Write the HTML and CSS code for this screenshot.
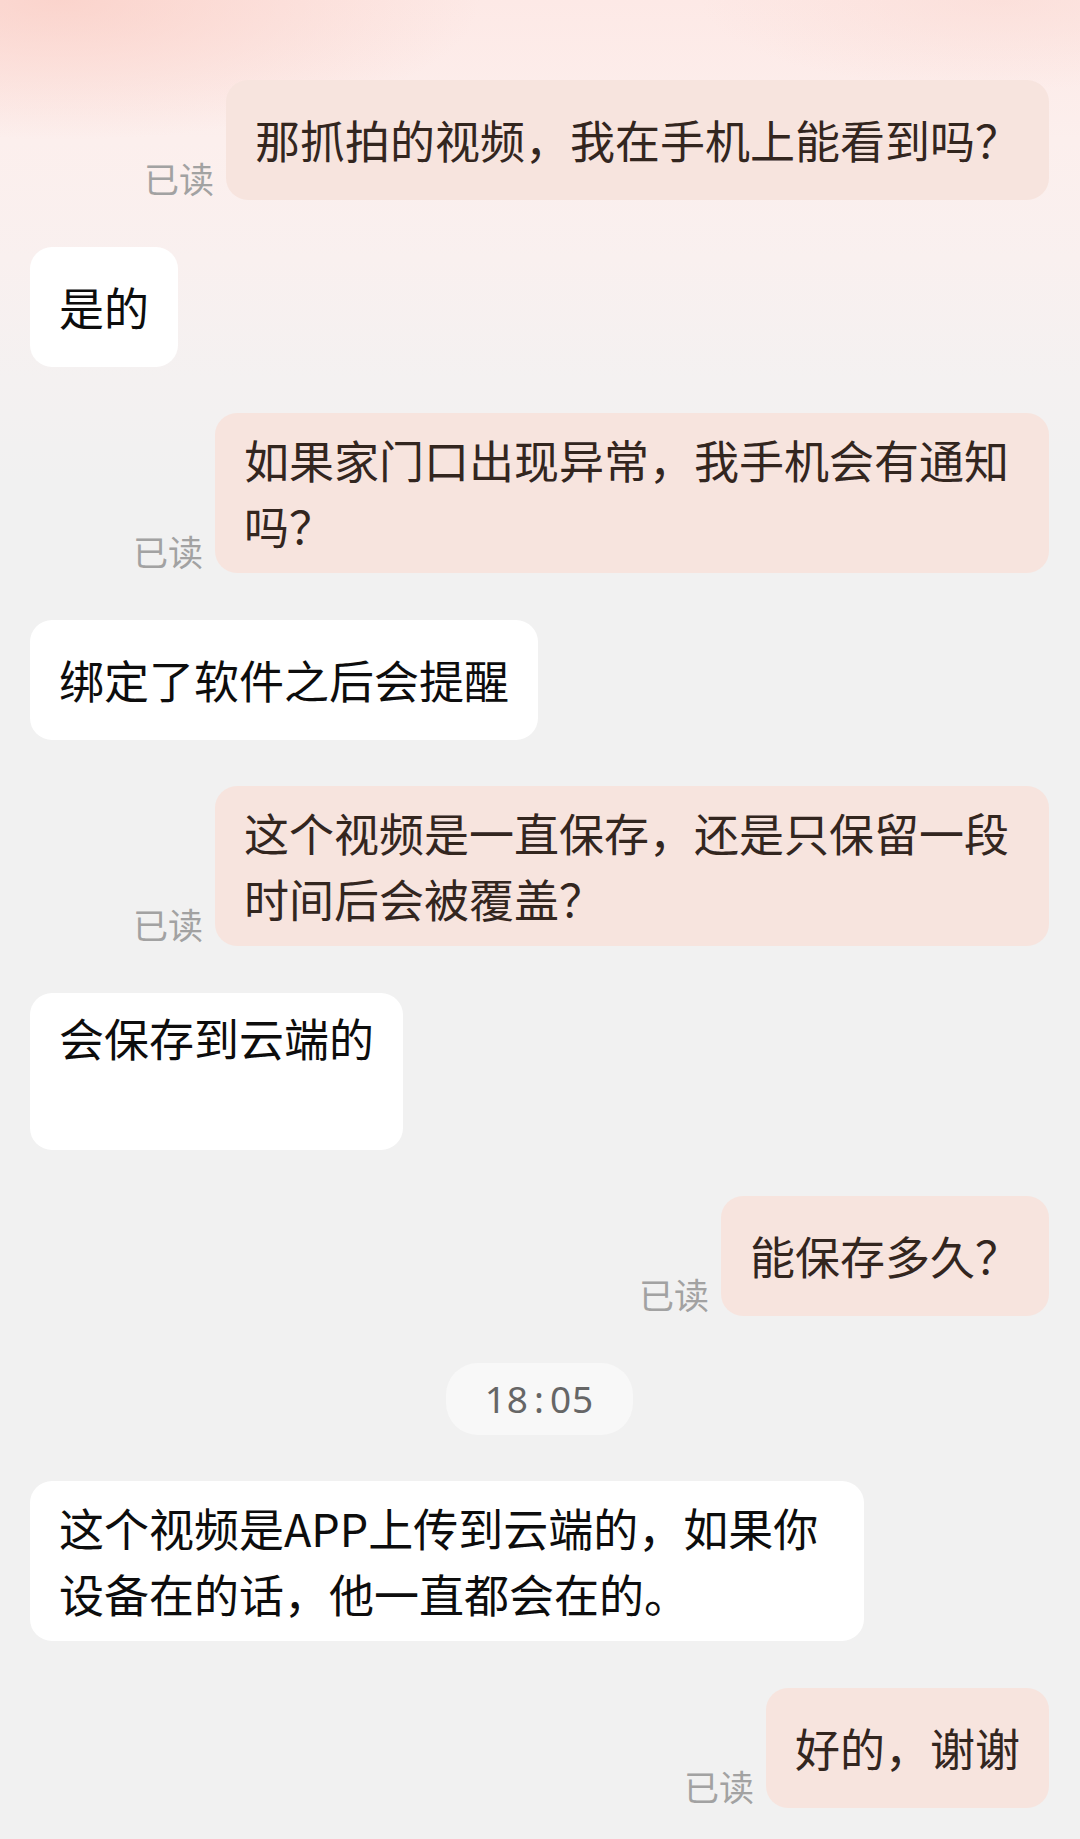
FILE: index.html
```html
<!DOCTYPE html>
<html lang="zh-CN">
<head>
<meta charset="utf-8">
<title>聊天记录</title>
<link rel="stylesheet" href="styles.css">
</head>
<body>
<div class="screen">
  <div class="chat">
    <div class="row sent">
      <span class="read">已读</span>
      <div class="bubble">那抓拍的视频，我在手机上能看到吗？</div>
    </div>
    <div class="row recv">
      <div class="bubble">是的</div>
    </div>
    <div class="row sent">
      <span class="read">已读</span>
      <div class="bubble">如果家门口出现异常，我手机会有通知吗？</div>
    </div>
    <div class="row recv">
      <div class="bubble">绑定了软件之后会提醒</div>
    </div>
    <div class="row sent">
      <span class="read">已读</span>
      <div class="bubble">这个视频是一直保存，还是只保留一段时间后会被覆盖？</div>
    </div>
    <div class="row recv">
      <div class="bubble bubble-tall">会保存到云端的<br>&nbsp;</div>
    </div>
    <div class="row sent">
      <span class="read">已读</span>
      <div class="bubble">能保存多久？</div>
    </div>
    <div class="time">
      <span class="time-pill">18<span class="time-colon">:</span>05</span>
    </div>
    <div class="row recv">
      <div class="bubble">这个视频是APP上传到云端的，如果你设备在的话，他一直都会在的。</div>
    </div>
    <div class="row sent">
      <span class="read">已读</span>
      <div class="bubble">好的，谢谢</div>
    </div>
  </div>
</div>
</body>
</html>
```

FILE: styles.css
```css
html, body {
  margin: 0;
  padding: 0;
}

body {
  width: 1080px;
  min-height: 1839px;
  background: #f1f1f1;
  font-family: "Noto Sans CJK SC", "Noto Sans", sans-serif;
}

.screen {
  min-height: 1839px;
  background:
    radial-gradient(ellipse 420px 140px at 60px 0px, rgba(250, 205, 196, 0.75), rgba(250, 205, 196, 0) 100%),
    radial-gradient(ellipse 300px 90px at 1000px 0px, rgba(250, 215, 208, 0.5), rgba(250, 215, 208, 0) 100%),
    linear-gradient(180deg, #fde9e6 0px, #fcefed 140px, #f9f0ef 260px, #f4f1f1 380px, #f1f1f1 480px);
}

.chat {
  display: flex;
  flex-direction: column;
  gap: 46.5px;
  padding: 80px 31px 0 30px;
}

.row {
  display: flex;
  align-items: flex-end;
  gap: 12px;
}

.row.sent {
  justify-content: flex-end;
}

.row.recv {
  justify-content: flex-start;
}

.bubble {
  box-sizing: border-box;
  max-width: 834px;
  min-height: 120px;
  padding: 14px 29px;
  display: flex;
  align-items: center;
  font-size: 45px;
  line-height: 66px;
  border-radius: 22px;
}

.sent .bubble {
  background: #f7e4de;
  color: #33261f;
}

.recv .bubble {
  background: #ffffff;
  color: #0d0d0d;
}

.bubble-tall {
  padding-top: 12px;
  padding-bottom: 13px;
}

.read {
  font-size: 35px;
  line-height: 35px;
  color: #a2a2a2;
  margin-bottom: 5px;
  white-space: nowrap;
}

.time {
  display: flex;
  justify-content: center;
}

.time-pill {
  height: 72px;
  line-height: 72px;
  padding: 0 39px;
  border-radius: 32px;
  background: #f8f8f8;
  color: #666666;
  font-family: "Noto Sans", sans-serif;
  font-size: 37px;
  letter-spacing: 1px;
}

.time-colon {
  margin: 0 5px;
}
```
